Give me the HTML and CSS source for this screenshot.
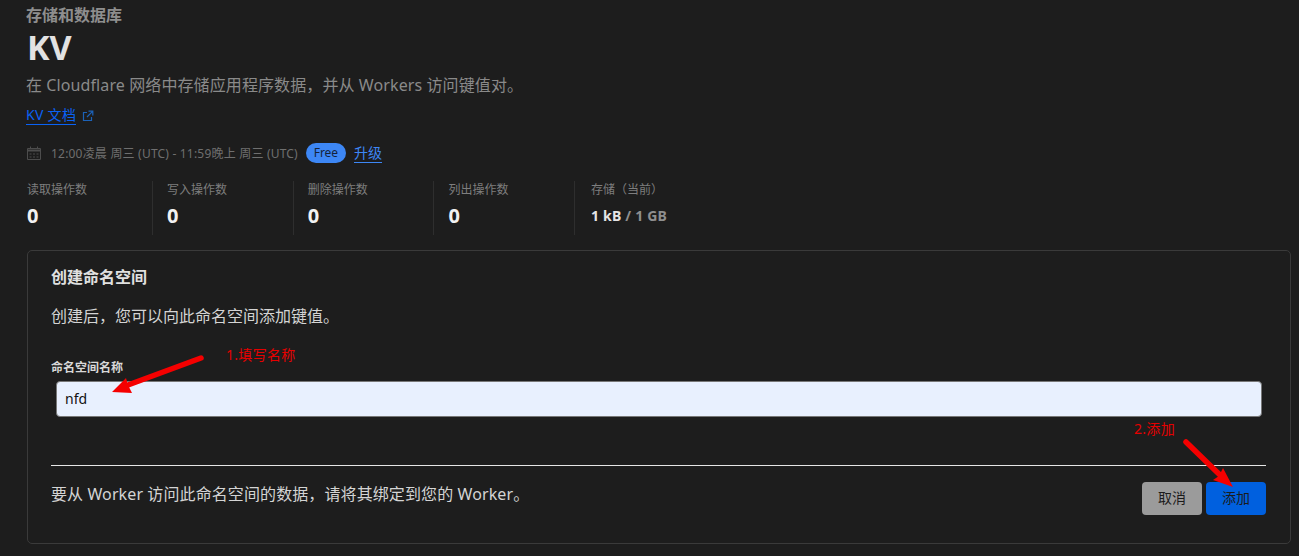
FILE: index.html
```html
<!DOCTYPE html>
<html lang="zh">
<head>
<meta charset="utf-8">
<title>KV</title>
<link rel="stylesheet" href="styles.css">
</head>
<body>
<main class="page">
  <div class="eyebrow">存储和数据库</div>
  <h1 class="title">KV</h1>
  <p class="desc">在 Cloudflare 网络中存储应用程序数据，并从 Workers 访问键值对。</p>
  <div class="doc-row">
    <a class="doc-link">KV 文档</a>
    <svg class="ext" viewBox="0 0 12 12" width="12" height="12" fill="none" stroke="#1c62b8" stroke-width="1.2"><path d="M5 2.5H1.5v8h8V7"/><path d="M6.5 1.2h4.3v4.3M10.6 1.4 5 7"/></svg>
  </div>
  <div class="range-row">
    <svg class="cal" viewBox="0 0 14 14" width="14" height="14" fill="none" stroke="#4d4d4d" stroke-width="1"><path d="M.5 2.5h13v11H.5z"/><path d="M.5 4.5h13" stroke-width="2"/><path d="M3.5 .5v2M10.5 .5v2M2.5 8h2M6 8h2M9.5 8h2M2.5 11h2M6 11h2M9.5 11h2"/></svg>
    <span class="range">12:00凌晨 周三 (UTC) - 11:59晚上 周三 (UTC)</span>
    <span class="badge">Free</span>
    <a class="upgrade">升级</a>
  </div>
  <div class="stats">
    <div class="stat"><div class="stat-label">读取操作数</div><div class="stat-value">0</div></div>
    <div class="stat"><div class="stat-label">写入操作数</div><div class="stat-value">0</div></div>
    <div class="stat"><div class="stat-label">删除操作数</div><div class="stat-value">0</div></div>
    <div class="stat"><div class="stat-label">列出操作数</div><div class="stat-value">0</div></div>
    <div class="stat"><div class="stat-label">存储（当前）</div><div class="stat-storage">1 kB <span class="muted">/ 1 GB</span></div></div>
  </div>
  <section class="card">
    <h2 class="card-title">创建命名空间</h2>
    <p class="card-desc">创建后，您可以向此命名空间添加键值。</p>
    <label class="field-label" for="ns">命名空间名称</label>
    <input class="field" id="ns" value="nfd">
    <div class="card-foot">
      <p class="foot-text">要从 Worker 访问此命名空间的数据，请将其绑定到您的 Worker。</p>
      <div class="actions">
        <button class="btn btn-cancel">取消</button>
        <button class="btn btn-add">添加</button>
      </div>
    </div>
    <span class="note note-1">1.填写名称</span>
    <span class="note note-2">2.添加</span>
  </section>
</main>
<svg class="arrows" width="1299" height="556" viewBox="0 0 1299 556">
  <path d="M201 358 128 385" stroke="#f50000" stroke-width="5.5" stroke-linecap="round" fill="none"/>
  <path d="M112 392 126 378 128 385 132 393Z" fill="#f50000"/>
  <path d="M1186 442 1220 475" stroke="#f50000" stroke-width="5.5" stroke-linecap="round" fill="none"/>
  <path d="M1233 487 1223 468 1219 476 1213 480Z" fill="#f50000"/>
</svg>
</body>
</html>
```
FILE: styles.css
```css
* { box-sizing: border-box; }
html, body { margin: 0; height: 556px; overflow: hidden; }
body {
  background: #1d1d1d;
  position: relative;
  font-family: "Noto Sans", "Noto Sans CJK SC", sans-serif;
  color: #d9d9d9;
}
.page { padding: 5px 9px 0 27px; }
.eyebrow { margin-left: -1px; font-size: 16px; line-height: 20px; font-weight: 700; color: #8e8e8e; }
.title { margin: 0; font-size: 34px; line-height: 40px; font-weight: 700; color: #e2e2e2; padding-top: 2px; }
.desc { margin: 6px 0 0 -1px; font-size: 16px; line-height: 24px; letter-spacing: 0.1px; color: #8a8a8a; }
.doc-row { display: flex; align-items: center; gap: 6px; margin-top: 9px; height: 19px; }
.doc-link { font-size: 14px; line-height: 18px; letter-spacing: 0.3px; margin-left: -1px; color: #0a62f5; border-bottom: 1px solid #0a62f5; }
.range-row { display: flex; align-items: center; margin-top: 18px; height: 20px; }
.cal { margin-right: 10px; }
.range { font-size: 12px; letter-spacing: 0.2px; color: #6f6f6f; margin-right: 8px; }
.badge { background: #3d87f5; color: #14233b; font-size: 12px; line-height: 20px; text-align: center; border-radius: 10px; margin-right: 8px; width: 40px; }
.upgrade { font-size: 14px; line-height: 18px; color: #3d87f5; border-bottom: 1px solid #3d87f5; }
.stats { display: flex; margin-top: 18px; height: 54px; }
.stat { width: 140.7px; padding-left: 14px; border-left: 1px solid #2e2e2e; }
.stat:first-child { padding-left: 0; border-left: 0; width: 125px; }
.stat:last-child { padding-left: 16px; }
.stat-label { font-size: 12px; line-height: 18px; color: #7e7e7e; }
.stat-value { font-size: 20px; line-height: 24px; font-weight: 700; color: #f2f2f2; margin-top: 5px; }
.stat-storage { font-size: 14px; line-height: 24px; letter-spacing: 0.2px; font-weight: 700; color: #e5e5e5; margin-top: 5px; }
.muted { color: #8f8f8f; }
.card {
  position: relative;
  margin-top: 15px;
  height: 294px;
  width: 1264px;
  border: 1px solid #3a3a3a;
  border-radius: 5px;
  padding: 14px 24px 0 23px;
}
.card-title { margin: 0; font-size: 16px; line-height: 24px; font-weight: 700; color: #e0e0e0; }
.card-desc { margin: 15px 0 0; font-size: 16px; line-height: 24px; color: #d4d4d4; }
.field-label { display: block; margin-top: 31px; font-size: 12px; line-height: 18px; font-weight: 700; color: #d8d8d8; }
.field {
  display: block;
  margin: 4px 0 0 5px;
  width: 1206px;
  height: 36px;
  padding: 0 8px 2px;
  border: 1px solid #777;
  border-radius: 4px;
  background: #e8f0fe;
  color: #111;
  font: 14px "Noto Sans", sans-serif;
}
.card-foot {
  margin-top: 48px;
  width: 1215px;
  border-top: 1px solid #e6e6e6;
  padding-top: 16px;
  display: flex;
  justify-content: space-between;
  align-items: flex-start;
}
.foot-text { margin: 0; font-size: 16px; line-height: 24px; letter-spacing: 0.1px; color: #d4d4d4; }
.actions { display: flex; gap: 4px; }
.btn { width: 60px; height: 33px; border: 0; border-radius: 4px; font: 14px "Noto Sans", "Noto Sans CJK SC", sans-serif; color: #1b1b1b; padding: 0 0 3px; }
.btn-cancel { background: #9b9b9b; }
.btn-add { background: #0060df; }
.note { position: absolute; color: #e60000; font-size: 14px; line-height: 18px; letter-spacing: 0.3px; }
.note-1 { left: 198px; top: 95px; }
.note-2 { left: 1106px; top: 169px; }
.arrows { position: absolute; left: 0; top: 0; pointer-events: none; }
```
